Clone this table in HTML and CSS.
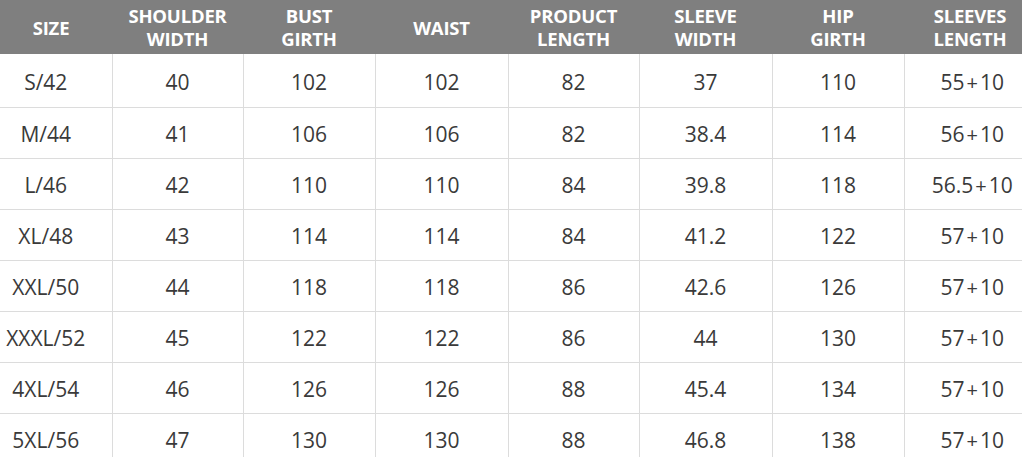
FILE: index.html
```html
<!DOCTYPE html>
<html>
<head>
<meta charset="utf-8">
<link rel="stylesheet" href="styles.css">
</head>
<body>
<table class="size-table">
  <colgroup>
    <col class="c0"><col class="c1"><col class="c2"><col class="c3"><col class="c4"><col class="c5"><col class="c6"><col class="c7">
  </colgroup>
  <thead>
    <tr>
      <th class="first">SIZE</th>
      <th>SHOULDER<br>WIDTH</th>
      <th>BUST<br>GIRTH</th>
      <th>WAIST</th>
      <th>PRODUCT<br>LENGTH</th>
      <th>SLEEVE<br>WIDTH</th>
      <th>HIP<br>GIRTH</th>
      <th>SLEEVES<br>LENGTH</th>
    </tr>
  </thead>
  <tbody>
    <tr class="top"><td>S/42</td><td>40</td><td>102</td><td>102</td><td>82</td><td>37</td><td>110</td><td class="last">55<span class="plus">+</span>10</td></tr>
    <tr><td>M/44</td><td>41</td><td>106</td><td>106</td><td>82</td><td>38.4</td><td>114</td><td class="last">56<span class="plus">+</span>10</td></tr>
    <tr><td>L/46</td><td>42</td><td>110</td><td>110</td><td>84</td><td>39.8</td><td>118</td><td class="last">56.5<span class="plus">+</span>10</td></tr>
    <tr><td>XL/48</td><td>43</td><td>114</td><td>114</td><td>84</td><td>41.2</td><td>122</td><td class="last">57<span class="plus">+</span>10</td></tr>
    <tr><td>XXL/50</td><td>44</td><td>118</td><td>118</td><td>86</td><td>42.6</td><td>126</td><td class="last">57<span class="plus">+</span>10</td></tr>
    <tr><td>XXXL/52</td><td>45</td><td>122</td><td>122</td><td>86</td><td>44</td><td>130</td><td class="last">57<span class="plus">+</span>10</td></tr>
    <tr><td>4XL/54</td><td>46</td><td>126</td><td>126</td><td>88</td><td>45.4</td><td>134</td><td class="last">57<span class="plus">+</span>10</td></tr>
    <tr><td>5XL/56</td><td>47</td><td>130</td><td>130</td><td>88</td><td>46.8</td><td>138</td><td class="last">57<span class="plus">+</span>10</td></tr>
  </tbody>
</table>
</body>
</html>
```
FILE: styles.css
```css
html, body {
  margin: 0;
  padding: 0;
  background: #ffffff;
  overflow: hidden;
  width: 1022px;
  height: 457px;
}
.size-table {
  margin-left: -20px;
  border-collapse: collapse;
  table-layout: fixed;
  width: 1056px;
  font-family: "Open Sans", "Noto Sans", sans-serif;
}
.c0 { width: 132px; }
.c1 { width: 131px; }
.c2 { width: 132px; }
.c3 { width: 133px; }
.c4 { width: 131px; }
.c5 { width: 133px; }
.c6 { width: 132px; }
.c7 { width: 132px; }
.size-table th {
  background: #7f7f7f;
  color: #ffffff;
  font-weight: 700;
  font-size: 18.5px;
  line-height: 23px;
  height: 54px;
  padding: 0;
  text-align: center;
  vertical-align: middle;
  letter-spacing: -0.2px;
}
.size-table th.first {
  padding-left: 10px;
}
.size-table td {
  height: 51px;
  padding: 3px 0 0 0;
  box-sizing: border-box;
  text-align: center;
  vertical-align: middle;
  font-size: 21px;
  color: #3a3a3a;
  border-top: 1px solid #dcdcdc;
  border-left: 1px solid #dcdcdc;
}
.size-table tr.top td {
  height: 53px;
  border-top: none;
}
.size-table td:first-child {
  border-left: none;
}
.size-table td.last {
  padding-left: 4px;
}
.plus {
  display: inline-block;
  margin: 0 2px;
  font-size: 20px;
}
```
